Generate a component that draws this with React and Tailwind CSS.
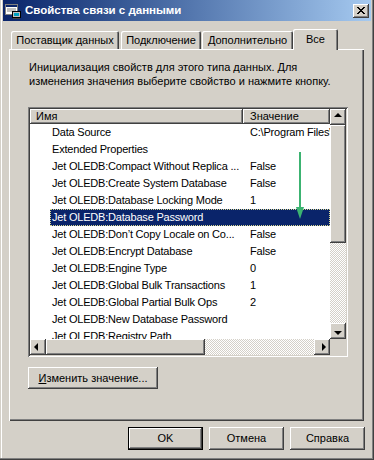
import React from 'react';

const raised =
  'shadow-[inset_-1px_-1px_0_#404040,inset_1px_1px_0_#ffffff,inset_-2px_-2px_0_#808080,inset_2px_2px_0_#d4d0c8]';

const rows = [
  ['Data Source', 'C:\\Program Files\\Microsoft Office\\db.mdb'],
  ['Extended Properties', ''],
  ['Jet OLEDB:Compact Without Replica ...', 'False'],
  ['Jet OLEDB:Create System Database', 'False'],
  ['Jet OLEDB:Database Locking Mode', '1'],
  ['Jet OLEDB:Database Password', ''],
  ['Jet OLEDB:Don\u2019t Copy Locale on Co...', 'False'],
  ['Jet OLEDB:Encrypt Database', 'False'],
  ['Jet OLEDB:Engine Type', '0'],
  ['Jet OLEDB:Global Bulk Transactions', '1'],
  ['Jet OLEDB:Global Partial Bulk Ops', '2'],
  ['Jet OLEDB:New Database Password', ''],
  ['Jet OLEDB:Registry Path', ''],
];

const Arrow = ({ dir }) => {
  const pts = {
    up: '4,6 8,2 12,6',
    down: '4,6 12,6 8,10',
    left: '6,4 6,12 2,8',
    right: '6,4 6,12 10,8',
  };
  const side = dir === 'left' || dir === 'right';
  return (
    <svg width={side ? 12 : 16} height={side ? 16 : 12} viewBox={side ? '0 0 12 16' : '0 0 16 12'}>
      <polygon points={pts[dir]} fill="#000" />
    </svg>
  );
};

const ScrollBtn = ({ dir }) => (
  <div className={`w-[16px] h-[16px] bg-[#d4d0c8] flex items-center justify-center shrink-0 ${raised}`}>
    <Arrow dir={dir} />
  </div>
);

const Track = ({ className }) => (
  <div
    className={`bg-[image:repeating-conic-gradient(#ffffff_0%_25%,#d4d0c8_0%_50%)] bg-[length:2px_2px] ${className}`}
  />
);

const Button = ({ children, className = '' }) => (
  <div
    className={`h-[23px] w-[75px] bg-[#d4d0c8] flex items-center justify-center text-[11px] ${raised} ${className}`}
  >
    {children}
  </div>
);

export default function App() {
  return (
    <div className="w-[374px] h-[460px] bg-[#d4d0c8] font-['Liberation_Sans',Arial,sans-serif] text-black shadow-[inset_-1px_-1px_0_#404040,inset_-2px_-2px_0_#808080,inset_1px_0_0_#d4d0c8,inset_2px_0_0_#ffffff] overflow-hidden select-none">
      {/* Title bar */}
      <div className="mx-[3px] h-[21px] bg-gradient-to-r from-[#0a246a] to-[#a6caf0] flex items-center pl-[2px] pr-[2px]">
        <svg width="16" height="16" viewBox="0 0 16 16" className="shrink-0">
          <rect x="0.5" y="1.5" width="12" height="10" fill="#ffffff" stroke="#808080" />
          <rect x="1" y="2" width="11" height="2" fill="#0a246a" />
          <line x1="2" y1="6" x2="11" y2="6" stroke="#808080" />
          <line x1="2" y1="8" x2="11" y2="8" stroke="#808080" />
          <rect x="7.5" y="8.5" width="8" height="6" fill="#c0c0c0" stroke="#000" />
          <rect x="9" y="10" width="5" height="3" fill="#00a0c0" />
          <rect x="8" y="15" width="7" height="1" fill="#404040" />
        </svg>
        <span className="ml-[4px] text-white font-bold text-[11.5px] leading-none whitespace-nowrap">
          Свойства связи с данными
        </span>
        <div className={`ml-auto w-[16px] h-[14px] bg-[#d4d0c8] flex items-center justify-center ${raised}`}>
          <svg width="8" height="7" viewBox="0 0 8 7">
            <path d="M0 0 L7 7 M1 0 L8 7 M7 0 L0 7 M8 0 L1 7" stroke="#000" strokeWidth="1" />
          </svg>
        </div>
      </div>

      {/* Tabs */}
      <div className="ml-[9px] mt-[8px] h-[20px] flex items-end relative z-10 text-[11px]">
        <div className="ml-[2px] w-[108px] h-[18px] flex items-center justify-center rounded-t-[2px] shadow-[inset_1px_1px_0_#ffffff,inset_-1px_0_0_#404040,inset_-2px_0_0_#808080]">
          Поставщик данных
        </div>
        <div className="ml-[2px] w-[80px] h-[18px] flex items-center justify-center rounded-t-[2px] shadow-[inset_1px_1px_0_#ffffff,inset_-1px_0_0_#404040,inset_-2px_0_0_#808080]">
          Подключение
        </div>
        <div className="ml-[1px] w-[91px] h-[18px] flex items-center justify-center rounded-t-[2px] shadow-[inset_1px_1px_0_#ffffff,inset_-1px_0_0_#404040,inset_-2px_0_0_#808080]">
          Дополнительно
        </div>
        <div className="w-[45px] h-[21px] -mb-px bg-[#d4d0c8] flex items-start pt-[2px] justify-center rounded-t-[2px] shadow-[inset_1px_1px_0_#ffffff,inset_-1px_0_0_#404040,inset_-2px_0_0_#808080]">
          Все
        </div>
      </div>

      {/* Tab page */}
      <div className="ml-[9px] w-[355px] h-[372px] pl-[19px] pt-[11px] shadow-[inset_1px_1px_0_#ffffff,inset_-1px_-1px_0_#404040,inset_-2px_-2px_0_#808080]">
        <p className="ml-[1px] text-[11px] leading-[14px] whitespace-nowrap">
          Инициализация свойств для этого типа данных. Для
          <br />
          изменения значения выберите свойство и нажмите кнопку.
        </p>

        {/* List view */}
        <div className="mt-[19px] w-[320px] h-[250px] p-[2px] bg-white shadow-[inset_1px_1px_0_#808080,inset_-1px_-1px_0_#ffffff,inset_2px_2px_0_#404040,inset_-2px_-2px_0_#d4d0c8]">
          <div className="flex h-[230px]">
            <div className="w-[300px] relative overflow-hidden text-[11px]">
              <div className="flex h-[15px]">
                <div className={`w-[213px] bg-[#d4d0c8] pl-[6px] leading-[15px] ${raised}`}>Имя</div>
                <div className={`flex-1 bg-[#d4d0c8] pl-[7px] leading-[15px] ${raised}`}>Значение</div>
              </div>
              {rows.map(([name, value], i) => {
                const sel = i === 5;
                return (
                  <div key={name} className="flex h-[17px] leading-[17px] whitespace-nowrap tracking-[-0.2px]">
                    <div className="w-[20px] shrink-0" />
                    <div
                      className={`flex flex-1 ${sel ? 'bg-[#0a246a] text-white outline-1 outline-dotted outline-[#d8d890] -outline-offset-1' : ''}`}
                    >
                      <div className="w-[193px] shrink-0 pl-[2px] overflow-hidden">{name}</div>
                      <div className="flex-1 pl-[7px] overflow-hidden">{value}</div>
                    </div>
                  </div>
                );
              })}
              {/* annotation arrow */}
              <svg className="absolute left-[265px] top-[43px]" width="10" height="68" viewBox="0 0 10 68">
                <line x1="5" y1="0" x2="5" y2="58" stroke="#3cb371" strokeWidth="2" />
                <polygon points="1,55 9,55 5,67" fill="#3cb371" />
              </svg>
            </div>
            {/* vertical scrollbar */}
            <div className="w-[16px] flex flex-col">
              <ScrollBtn dir="up" />
              <div className={`h-[118px] bg-[#d4d0c8] ${raised}`} />
              <Track className="flex-1" />
              <ScrollBtn dir="down" />
            </div>
          </div>
          {/* horizontal scrollbar */}
          <div className="flex h-[16px]">
            <ScrollBtn dir="left" />
            <div className={`w-[159px] bg-[#d4d0c8] ${raised}`} />
            <Track className="w-[109px]" />
            <ScrollBtn dir="right" />
            <div className="w-[16px] bg-[#d4d0c8]" />
          </div>
        </div>

        <div className={`mt-[10px] w-[130px] h-[22px] bg-[#d4d0c8] flex items-center justify-center text-[11px] ${raised}`}>
          <span>
            <span className="underline">И</span>зменить значение...
          </span>
        </div>
      </div>

      {/* Dialog buttons */}
      <div className="mt-[6px] pr-[9px] flex justify-end gap-[6px]">
        <Button className="shadow-[inset_0_0_0_1px_#000000,inset_-2px_-2px_0_#404040,inset_2px_2px_0_#ffffff,inset_-3px_-3px_0_#808080]">
          OK
        </Button>
        <Button>Отмена</Button>
        <Button>Справка</Button>
      </div>
    </div>
  );
}
